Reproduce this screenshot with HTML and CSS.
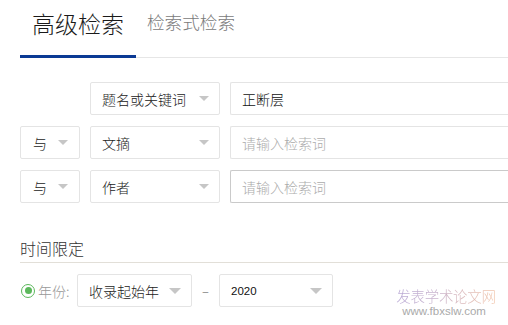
FILE: index.html
```html
<!DOCTYPE html>
<html lang="zh-CN">
<head>
<meta charset="utf-8">
<title>高级检索</title>
<link rel="stylesheet" href="styles.css">
</head>
<body>
<div class="page">
  <div class="tabs">
    <div class="tab tab-active">高级检索</div>
    <div class="tab tab-other">检索式检索</div>
  </div>

  <div class="form">
    <div class="row">
      <div class="logic-spacer"></div>
      <div class="sel sel-field"><span>题名或关键词</span><i class="arrow"></i></div>
      <div class="field"><span class="value">正断层</span></div>
    </div>
    <div class="row">
      <div class="sel sel-logic"><span>与</span><i class="arrow"></i></div>
      <div class="sel sel-field"><span>文摘</span><i class="arrow"></i></div>
      <div class="field"><span class="placeholder">请输入检索词</span></div>
    </div>
    <div class="row">
      <div class="sel sel-logic"><span>与</span><i class="arrow"></i></div>
      <div class="sel sel-field"><span>作者</span><i class="arrow"></i></div>
      <div class="field field-hover"><span class="placeholder">请输入检索词</span></div>
    </div>
  </div>

  <div class="section-title">时间限定</div>

  <div class="year-row">
    <div class="radio-group">
      <span class="radio"><span class="dot"></span></span>
      <span class="radio-label">年份:</span>
    </div>
    <div class="sel sel-year"><span>收录起始年</span><i class="arrow arrow-lg"></i></div>
    <div class="dash">–</div>
    <div class="sel sel-year2"><span class="num">2020</span><i class="arrow arrow-lg"></i></div>
  </div>
</div>

<div class="watermark">
  <div class="wm-title">发表学术论文网</div>
  <div class="wm-url">www.fbxslw.com</div>
</div>
</body>
</html>
```

FILE: styles.css
```css
html, body {
  margin: 0;
  padding: 0;
  overflow: hidden;
  background: #ffffff;
}

body {
  font-family: "Noto Sans CJK SC", "Noto Sans", sans-serif;
  font-weight: 300;
  color: #222222;
  width: 508px;
  height: 325px;
  position: relative;
}

.page {
  box-sizing: border-box;
  width: 508px;
  padding-left: 20px;
}

/* tabs */
.tabs {
  display: flex;
  align-items: flex-start;
  height: 57px;
  border-bottom: 1px solid #e6e6e6;
}

.tab {
  white-space: nowrap;
}

.tab-active {
  box-sizing: border-box;
  height: 58px;
  margin-bottom: -1px;
  padding: 11px 12px 0 12px;
  font-size: 23px;
  line-height: 24px;
  color: #1a1a1a;
  border-bottom: 3px solid #0b3a94;
}

.tab-other {
  margin-left: 11px;
  padding-top: 13px;
  font-size: 17.6px;
  line-height: 18px;
  color: #7a7a7a;
}

/* form rows */
.form {
  margin-top: 24px;
  display: flex;
  flex-direction: column;
  gap: 11px;
}

.row {
  display: flex;
  gap: 10px;
  height: 33px;
}

.logic-spacer {
  width: 60px;
  flex: none;
}

.sel {
  box-sizing: border-box;
  height: 33px;
  flex: none;
  display: flex;
  align-items: center;
  justify-content: space-between;
  border: 1px solid #e4e4e4;
  border-radius: 2px;
  padding: 0 10px 0 11px;
  font-size: 14px;
  color: #222222;
  background: #ffffff;
}

.sel-logic {
  width: 60px;
  padding-left: 12px;
  padding-right: 11px;
}

.sel-field {
  width: 130px;
}

.arrow {
  display: block;
  width: 0;
  height: 0;
  border-left: 5.5px solid transparent;
  border-right: 5.5px solid transparent;
  border-top: 5px solid #c6c6c6;
}

.arrow-lg {
  border-left-width: 6px;
  border-right-width: 6px;
  border-top-width: 6px;
}

/* the text fields continue past the right edge of the frame */
.field {
  box-sizing: border-box;
  flex: 1;
  min-width: 0;
  height: 33px;
  display: flex;
  align-items: center;
  padding-left: 11px;
  border: 1px solid #e4e4e4;
  border-right: none;
  border-radius: 2px 0 0 2px;
  font-size: 14px;
}

.field-hover {
  border-color: #cacaca;
}

.value {
  color: #111111;
}

.placeholder {
  color: #ababab;
}

/* time limit */
.section-title {
  margin-top: 34px;
  padding-bottom: 3px;
  font-size: 16px;
  line-height: 22px;
  color: #333333;
  border-bottom: 1px solid #e2dfd8;
}

.year-row {
  margin-top: 11px;
  display: flex;
  align-items: center;
  height: 33px;
}

.radio-group {
  width: 57px;
  flex: none;
  display: flex;
  align-items: center;
  gap: 3px;
}

.radio {
  box-sizing: border-box;
  width: 14px;
  height: 14px;
  margin-left: 1px;
  border: 1.5px solid #5cb85c;
  border-radius: 50%;
  display: flex;
  align-items: center;
  justify-content: center;
}

.dot {
  width: 7px;
  height: 7px;
  border-radius: 50%;
  background: #5cb85c;
}

.radio-label {
  font-size: 14px;
  color: #999999;
  white-space: nowrap;
}

.sel-year {
  width: 115px;
}

.dash {
  width: 27px;
  flex: none;
  text-align: center;
  font-size: 13px;
  color: #666666;
}

.sel-year2 {
  width: 114px;
}

.num {
  font-family: "Liberation Sans", Arial, sans-serif;
  font-size: 11.5px;
  color: #111111;
}

/* watermark overlay */
.watermark {
  position: absolute;
  left: 394px;
  top: 287px;
  width: 104px;
  text-align: center;
  pointer-events: none;
}

.wm-title {
  font-size: 14.5px;
  line-height: 18px;
  letter-spacing: -0.3px;
  white-space: nowrap;
  background: linear-gradient(90deg, #b6a6d4 0%, #c7b1cc 40%, #f3c4a6 100%);
  -webkit-background-clip: text;
  background-clip: text;
  color: transparent;
}

.wm-url {
  font-family: "Liberation Sans", Arial, sans-serif;
  font-size: 11.5px;
  line-height: 12px;
  color: #aaaaaa;
  white-space: nowrap;
  margin-left: -4px;
}
```
